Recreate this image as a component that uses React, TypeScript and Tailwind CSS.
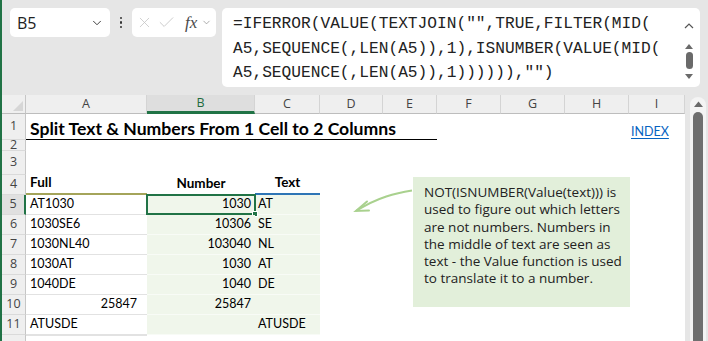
import React from 'react';
import { ChevronDown, X, Check } from 'lucide-react';

const cellFont = "font-['Lato',sans-serif]";
const uiFont = "font-['Open_Sans',sans-serif]";

const cols = ['A', 'B', 'C', 'D', 'E', 'F', 'G', 'H', 'I'];

const data = [
  { a: 'AT1030', num: '1030', txt: 'AT' },
  { a: '1030SE6', num: '10306', txt: 'SE' },
  { a: '1030NL40', num: '103040', txt: 'NL' },
  { a: '1030AT', num: '1030', txt: 'AT' },
  { a: '1040DE', num: '1040', txt: 'DE' },
  { a: '25847', num: '25847', txt: '', right: true },
  { a: 'ATUSDE', num: '', txt: 'ATUSDE' },
];

const note = [
  'NOT(ISNUMBER(Value(text))) is',
  'used to figure out which letters',
  'are not numbers. Numbers in',
  'the middle of text are seen as',
  'text - the Value function is used',
  'to translate it to a number.',
];

const RowHead: React.FC<{ n?: number; active?: boolean; last?: boolean }> = ({ n, active, last }) => (
  <div
    className={`flex items-center justify-center text-[12.5px] text-[#444] ${uiFont} ${
      active ? 'bg-[#e0e0e0] border-r-2 border-r-[#217346]' : 'bg-[#efefef] border-r border-r-[#c6c6c6]'
    } ${last ? '' : 'border-b border-b-[#dadada]'}`}
  >
    {n}
  </div>
);

export default function App() {
  return (
    <div className="w-[708px] h-[341px] bg-[#e6e6e6] border-l-2 border-[#217346] relative overflow-hidden flex flex-col">
      {/* formula toolbar */}
      <div className="h-[95px] flex items-start pt-[8px] shrink-0">
        <div className="ml-[8px] w-[100px] h-[29px] bg-white rounded-[5px] flex items-center justify-between pl-[7px] pr-[6px]">
          <span className={`text-[16px] text-[#222] ${uiFont}`}>B5</span>
          <ChevronDown size={14} strokeWidth={1.6} color="#333" />
        </div>
        <div className="w-[22px] h-[29px] flex flex-col items-center justify-center gap-[2px]">
          <span className="w-[2.5px] h-[2.5px] rounded-full bg-[#333]" />
          <span className="w-[2.5px] h-[2.5px] rounded-full bg-[#333]" />
          <span className="w-[2.5px] h-[2.5px] rounded-full bg-[#333]" />
        </div>
        <div className="w-[84px] h-[29px] bg-white rounded-[5px] flex items-center pl-[4px] gap-[4px]">
          <X size={17} strokeWidth={1.1} color="#c4c4c4" />
          <Check size={19} strokeWidth={1.1} color="#c4c4c4" />
          <span className="ml-[5px] text-[17px] italic text-[#4a4a4a] font-['Liberation_Serif',serif] leading-none">
            fx
          </span>
          <ChevronDown size={11} strokeWidth={1.5} color="#888" />
        </div>
        <div className="ml-[6px] w-[478px] h-[79px] bg-white rounded-[5px] flex">
          <div className="flex-1 pl-[11px] pt-[4px] font-['Liberation_Mono',monospace] text-[16.2px] leading-[24.5px] text-[#222]">
            <div className="whitespace-pre">=IFERROR(VALUE(TEXTJOIN("",TRUE,FILTER(MID(</div>
            <div className="whitespace-pre">A5,SEQUENCE(,LEN(A5)),1),ISNUMBER(VALUE(MID(</div>
            <div className="whitespace-pre">A5,SEQUENCE(,LEN(A5)),1)))))),"")</div>
          </div>
          <div className="w-[22px] flex flex-col items-center pt-[14px]">
            <svg width="10" height="7" viewBox="0 0 10 7">
              <path d="M1 6 L5 2 L9 6" fill="none" stroke="#555" strokeWidth="1.2" />
            </svg>
            <svg width="8" height="6" viewBox="0 0 8 6" className="mt-[14px]">
              <path d="M0 6 L4 1 L8 6 Z" fill="#6a6a6a" />
            </svg>
            <div className="w-[7px] h-[17px] rounded-full bg-[#6a6a6a] mt-[3px]" />
            <svg width="8" height="6" viewBox="0 0 8 6" className="mt-[5px]">
              <path d="M0 0 L8 0 L4 5 Z" fill="#6a6a6a" />
            </svg>
          </div>
        </div>
      </div>

      {/* sheet */}
      <div className="flex flex-1 min-h-0">
        <div
          className={`w-[683px] bg-white grid grid-cols-[24px_121px_108px_65px_63px_54px_64px_64px_64px_56px] grid-rows-[19px_26px_11px_24px_repeat(8,20px)] ${cellFont} text-[12.5px] text-black`}
        >
          {/* column headers */}
          <div className="bg-[#efefef] border-b border-b-[#bdbdbd] border-r border-r-[#c6c6c6] relative">
            <svg width="10" height="10" viewBox="0 0 10 10" className="absolute right-[2px] bottom-[2px]">
              <path d="M10 0 L10 10 L0 10 Z" fill="#d6d6d6" />
            </svg>
          </div>
          {cols.map((c) => (
            <div
              key={c}
              className={`flex items-center justify-center text-[12.5px] ${uiFont} border-r border-r-[#d4d4d4] ${
                c === 'B'
                  ? 'bg-[#dedede] text-[#1e6b3f] border-b-[3px] border-b-[#217346]'
                  : 'bg-[#efefef] text-[#444] border-b border-b-[#bdbdbd]'
              }`}
            >
              {c}
            </div>
          ))}

          {/* row 1 */}
          <RowHead n={1} />
          <div className="col-span-5 border-b-[1.5px] border-black flex items-end pl-[4px] pb-[1px]">
            <span className="text-[17.6px] font-bold leading-none whitespace-nowrap">
              Split Text &amp; Numbers From 1 Cell to 2 Columns
            </span>
          </div>
          <div />
          <div />
          <div />
          <div className="flex items-end pl-[2px] pb-[2px]">
            <span className="text-[#0563c1] underline underline-offset-[2px] leading-none">INDEX</span>
          </div>

          {/* row 2 */}
          <RowHead n={2} />
          {cols.map((c) => (
            <div key={c} />
          ))}

          {/* row 3 */}
          <RowHead n={3} />
          {cols.map((c) => (
            <div key={c} />
          ))}

          {/* row 4 */}
          <RowHead n={4} />
          <div className="flex items-end pl-[4px] pb-[1px] text-[13.5px] font-bold border-b-2 border-b-[#a4a45a]">Full</div>
          <div className="flex items-end justify-center pb-[2px] text-[13.5px] font-bold">Number</div>
          <div className="flex items-end justify-center pb-[1px] text-[13.5px] font-bold border-b-2 border-b-[#2e75b6]">
            Text
          </div>
          {cols.slice(3).map((c) => (
            <div key={c} />
          ))}

          {/* rows 5 - 11 */}
          {data.map((d, i) => (
            <React.Fragment key={i}>
              <RowHead n={i + 5} active={i === 0} />
              <div
                className={`flex items-center border-b border-b-[#e2e2e2] ${
                  d.right ? 'justify-end pr-[10px]' : 'pl-[4px]'
                }`}
              >
                {d.a}
              </div>
              <div className="flex items-center justify-end pr-[4px] bg-[#f0f6eb] border-b border-b-[#f8fbf6] relative">
                {d.num}
                {i === 0 && (
                  <>
                    <div className="absolute -top-[1px] -left-[1px] -right-[1px] -bottom-[1px] border-2 border-[#217346]" />
                    <div className="absolute -right-[3px] -bottom-[3px] w-[6px] h-[6px] bg-[#217346] border border-white" />
                  </>
                )}
              </div>
              <div className="flex items-center pl-[3px] bg-[#f0f6eb] border-b border-b-[#f8fbf6]">{d.txt}</div>
              {cols.slice(3).map((c) => (
                <div key={c} />
              ))}
            </React.Fragment>
          ))}

          {/* row 12, cut by the window edge */}
          <RowHead last />
          {cols.map((c) => (
            <div key={c} className={c === 'A' ? 'border-t border-t-[#e2e2e2]' : ''} />
          ))}
        </div>

        {/* vertical scrollbar */}
        <div className="flex-1 pl-[5px] pr-[2px] pt-[2px]">
          <div className="h-full bg-[#f4f4f4] rounded-t-full flex flex-col items-center pt-[4px]">
            <svg width="9" height="6" viewBox="0 0 9 6">
              <path d="M0 6 L4.5 0.5 L9 6 Z" fill="#6a6a6a" />
            </svg>
            <div className="w-[10px] flex-1 mt-[5px] bg-[#6f6f6f] rounded-t-full" />
          </div>
        </div>
      </div>

      {/* callout */}
      <svg className="absolute left-[350px] top-[185px]" width="64" height="32" viewBox="0 0 64 32">
        <path d="M60 5.5 C44 8 26 12 4 26" fill="none" stroke="#a9d18e" strokeWidth="2" />
        <path d="M15 16.5 L4 26 L17 25.5" fill="none" stroke="#a9d18e" strokeWidth="2" strokeLinecap="round" />
      </svg>
      <div
        className={`absolute left-[411px] top-[177px] w-[217px] h-[130px] bg-[#e2efda] pl-[11px] pt-[7px] ${uiFont} text-[13.5px] leading-[17.3px] text-[#222]`}
      >
        {note.map((l) => (
          <div key={l} className="whitespace-nowrap">
            {l}
          </div>
        ))}
      </div>
    </div>
  );
}
